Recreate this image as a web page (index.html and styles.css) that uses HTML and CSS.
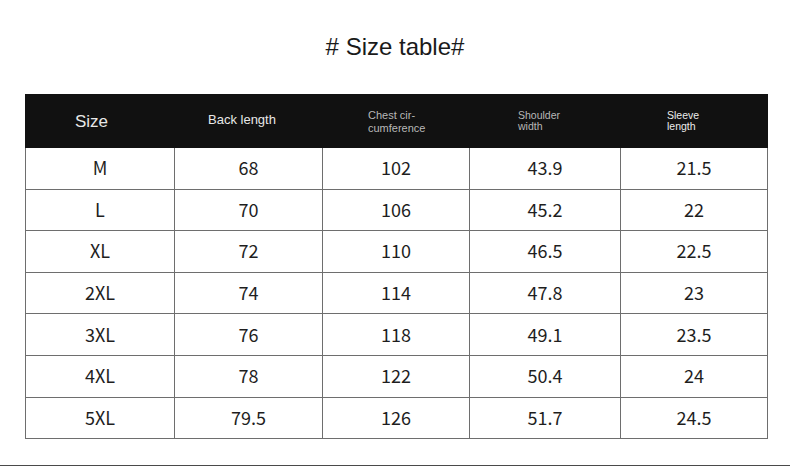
FILE: index.html
```html
<!DOCTYPE html>
<html>
<head>
<meta charset="utf-8">
<link rel="stylesheet" href="styles.css">
</head>
<body>
<h1 class="title"># Size table#</h1>
<table class="size-table">
  <colgroup>
    <col class="c1"><col class="c2"><col class="c3"><col class="c4"><col class="c5">
  </colgroup>
  <thead>
    <tr>
      <th class="h-size">Size</th>
      <th class="h-back">Back length</th>
      <th class="h-chest"><span class="two">Chest cir-<br>cumference</span></th>
      <th class="h-shoulder"><span class="two tight">Shoulder<br>width</span></th>
      <th class="h-sleeve"><span class="two tight bright">Sleeve<br>length</span></th>
    </tr>
  </thead>
  <tbody>
    <tr><td>M</td><td>68</td><td>102</td><td>43.9</td><td>21.5</td></tr>
    <tr><td>L</td><td>70</td><td>106</td><td>45.2</td><td>22</td></tr>
    <tr><td>XL</td><td>72</td><td>110</td><td>46.5</td><td>22.5</td></tr>
    <tr><td>2XL</td><td>74</td><td>114</td><td>47.8</td><td>23</td></tr>
    <tr><td>3XL</td><td>76</td><td>118</td><td>49.1</td><td>23.5</td></tr>
    <tr><td>4XL</td><td>78</td><td>122</td><td>50.4</td><td>24</td></tr>
    <tr><td>5XL</td><td>79.5</td><td>126</td><td>51.7</td><td>24.5</td></tr>
  </tbody>
</table>
<div class="rule"></div>
</body>
</html>
```
FILE: styles.css
```css
html, body {
  margin: 0;
  padding: 0;
  background: #fff;
}
body {
  width: 790px;
  height: 466px;
  overflow: hidden;
  font-family: "Liberation Sans", Arial, sans-serif;
}
.title {
  margin: 0;
  height: 94px;
  line-height: 94px;
  text-align: center;
  font-size: 24px;
  font-weight: normal;
  color: #1a1a1a;
}
.size-table {
  margin-left: 25px;
  width: 742px;
  border-collapse: collapse;
  table-layout: fixed;
}
.c1 { width: 149px; }
.c2 { width: 148px; }
.c3 { width: 147px; }
.c4 { width: 151px; }
.c5 { width: 147px; }
.size-table thead tr {
  height: 53px;
  background: #111;
}
.size-table th {
  background: #111;
  color: #e8e8e8;
  font-weight: normal;
  text-align: left;
  vertical-align: middle;
  padding: 0;
  border: 1px solid #111;
  border-left: 1px solid #1e1e1e;
}
.size-table th:first-child { border-left-color: #111; }
.h-size { font-size: 17px; padding-left: 49px !important; padding-top: 2px !important; }
.h-back { font-size: 13px; padding-left: 33px !important; padding-bottom: 3px !important; }
.h-chest { padding-left: 45px !important; padding-top: 1px !important; }
.h-shoulder { padding-left: 48px !important; }
.h-sleeve { padding-left: 46px !important; }
.two {
  display: block;
  font-size: 11px;
  line-height: 12.5px;
  color: #b8b8b8;
}
.two.tight {
  font-size: 10.5px;
  line-height: 11px;
}
.two.bright { color: #ececec; }
.size-table tbody tr {
  height: 41.6px;
}
.size-table td {
  border: 1px solid #6e6e6e;
  text-align: center;
  vertical-align: middle;
  padding: 0 0 2px 0;
  font-family: "Noto Sans CJK SC", "Noto Sans", sans-serif;
  font-size: 18px;
  color: #1e1e1e;
}
.size-table tbody tr:first-child td { border-top-color: #111; }
.rule {
  margin-top: 26px;
  height: 1px;
  background: #4a4a4a;
}
```
